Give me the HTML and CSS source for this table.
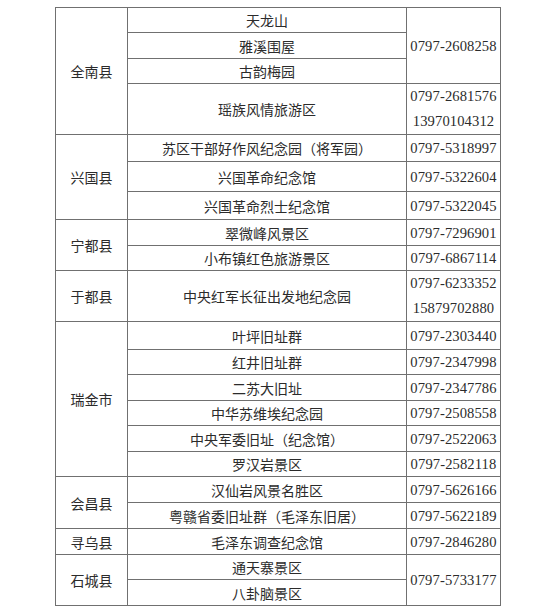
FILE: index.html
```html
<!DOCTYPE html>
<html lang="zh">
<head>
<meta charset="utf-8">
<title>赣州红色旅游景区联系电话</title>
<link rel="stylesheet" href="styles.css">
</head>
<body>
<div class="page">
<table class="sites">
  <colgroup><col class="c-county"><col class="c-site"><col class="c-phone"></colgroup>
  <tbody>
    <tr class="h25"><td class="county" rowspan="4">全南县</td><td>天龙山</td><td class="phone" rowspan="3">0797-2608258</td></tr>
    <tr class="h26"><td>雅溪围屋</td></tr>
    <tr class="h25"><td>古韵梅园</td></tr>
    <tr class="h50"><td>瑶族风情旅游区</td><td class="phone two">0797-2681576<br>13970104312</td></tr>
    <tr class="h27"><td class="county" rowspan="3">兴国县</td><td>苏区干部好作风纪念园（将军园）</td><td class="phone">0797-5318997</td></tr>
    <tr class="h30"><td>兴国革命纪念馆</td><td class="phone">0797-5322604</td></tr>
    <tr class="h28"><td>兴国革命烈士纪念馆</td><td class="phone">0797-5322045</td></tr>
    <tr class="h26"><td class="county" rowspan="2">宁都县</td><td>翠微峰风景区</td><td class="phone">0797-7296901</td></tr>
    <tr class="h25"><td>小布镇红色旅游景区</td><td class="phone">0797-6867114</td></tr>
    <tr class="h50"><td class="county">于都县</td><td>中央红军长征出发地纪念园</td><td class="phone two">0797-6233352<br>15879702880</td></tr>
    <tr class="h28"><td class="county" rowspan="6">瑞金市</td><td>叶坪旧址群</td><td class="phone">0797-2303440</td></tr>
    <tr class="h25"><td>红井旧址群</td><td class="phone">0797-2347998</td></tr>
    <tr class="h26"><td>二苏大旧址</td><td class="phone">0797-2347786</td></tr>
    <tr class="h25"><td>中华苏维埃纪念园</td><td class="phone">0797-2508558</td></tr>
    <tr class="h26"><td>中央军委旧址（纪念馆）</td><td class="phone">0797-2522063</td></tr>
    <tr class="h25"><td>罗汉岩景区</td><td class="phone">0797-2582118</td></tr>
    <tr class="h26"><td class="county" rowspan="2">会昌县</td><td>汉仙岩风景名胜区</td><td class="phone">0797-5626166</td></tr>
    <tr class="h26"><td>粤赣省委旧址群（毛泽东旧居）</td><td class="phone">0797-5622189</td></tr>
    <tr class="h26"><td class="county">寻乌县</td><td>毛泽东调查纪念馆</td><td class="phone">0797-2846280</td></tr>
    <tr class="h25"><td class="county" rowspan="2">石城县</td><td>通天寨景区</td><td class="phone" rowspan="2">0797-5733177</td></tr>
    <tr class="h26"><td>八卦脑景区</td></tr>
  </tbody>
</table>
</div>
</body>
</html>
```
FILE: styles.css
```css
html, body {
  margin: 0;
  padding: 0;
  background: #ffffff;
}

.page {
  padding: 7px 0 0 55px;
}

.sites {
  border-collapse: collapse;
  table-layout: fixed;
  width: 445px;
  color: #2b2b2b;
  font-family: "Liberation Serif", "Noto Sans CJK SC", serif;
  font-size: 14px;
}

.c-county { width: 72px; }
.c-site { width: 279px; }
.c-phone { width: 94px; }

.sites td {
  border: 1px solid #707070;
  padding: 0;
  text-align: center;
  vertical-align: middle;
  line-height: 20px;
  white-space: nowrap;
  font-family: "Noto Sans CJK SC", sans-serif;
  font-weight: 400;
}

.sites td.county {
  font-size: 14px;
}

.sites td.phone {
  font-family: "Liberation Serif", serif;
  font-size: 14.6px;
  letter-spacing: 0.1px;
}

.sites td.phone.two {
  line-height: 25px;
}

.h25 { height: 25px; }
.h26 { height: 26px; }
.h27 { height: 27px; }
.h28 { height: 28px; }
.h30 { height: 30px; }
.h50 { height: 50px; }
```
